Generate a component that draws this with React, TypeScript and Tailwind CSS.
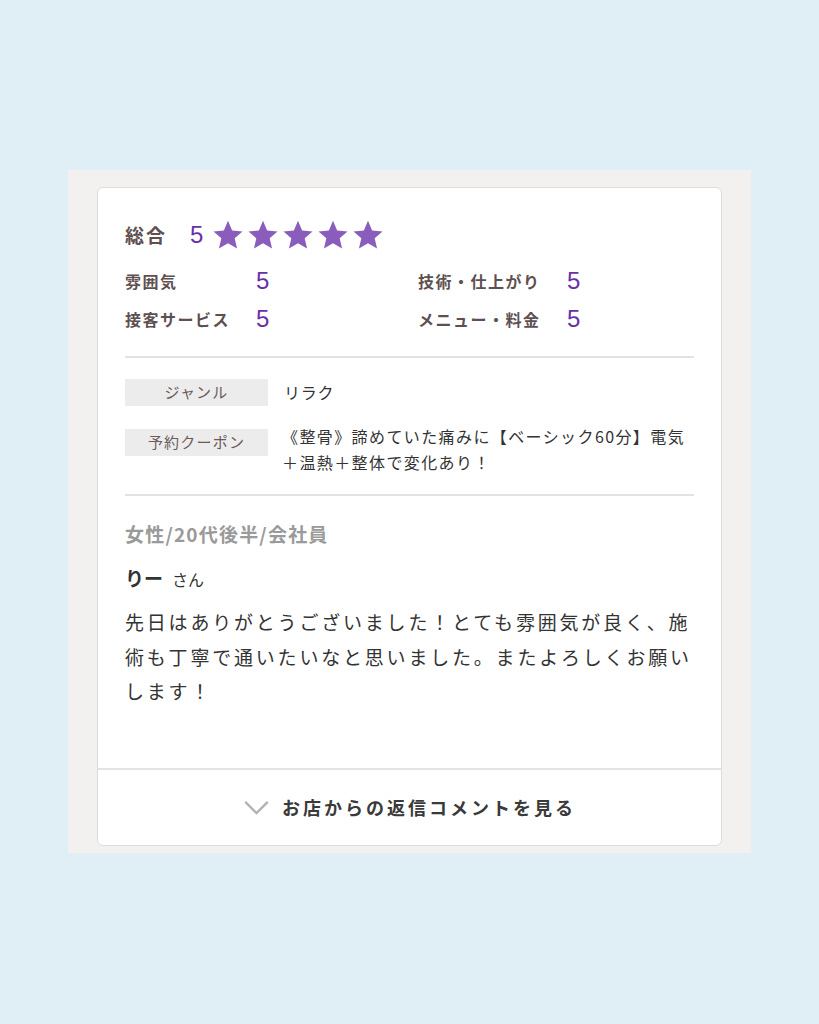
const font = { fontFamily: '"Noto Sans CJK JP", "Noto Sans", sans-serif' };
const num = { fontFamily: '"Liberation Sans", sans-serif' };

function Star() {
  return (
    <svg viewBox="0 0 24 24" className="size-[32px] fill-[#8a5cbc]">
      <path d="M12 1.4l3.1 7.2 7.8.7-5.9 5.1 1.8 7.7L12 18.1l-6.8 4 1.8-7.7-5.9-5.1 7.8-.7z" />
    </svg>
  );
}

function SubRating({ label, labelWidth }: { label: string; labelWidth: string }) {
  return (
    <div className="flex items-center h-[38px]">
      <span className={`${labelWidth} text-[16px] font-bold tracking-[1.5px] text-[#5e5050]`}>{label}</span>
      <span className="text-[24px] text-[#6a30a8] leading-none" style={num}>5</span>
    </div>
  );
}

export default function App() {
  return (
    <div className="min-h-screen bg-[#e0eff6] flex justify-center pt-[170px]" style={font}>
      <div className="w-[683px] h-[683px] bg-[#f2f1ef] px-[29px] pt-[17px] pb-[7px]">
        <div className="h-full bg-white border border-[#dcdcdc] rounded-[6px] flex flex-col">
          <div className="flex-1 px-[27px] pt-[30px]">
            <div className="flex items-center h-[34px]">
              <span className="text-[19px] font-bold tracking-[2px] text-[#5e5050] w-[65px]">総合</span>
              <span className="text-[24px] text-[#6a30a8] mr-[9px] leading-none" style={num}>5</span>
              <div className="flex gap-[3px]">
                <Star />
                <Star />
                <Star />
                <Star />
                <Star />
              </div>
            </div>
            <div className="grid grid-cols-[293px_1fr] mt-[10px]">
              <SubRating label="雰囲気" labelWidth="w-[131px]" />
              <SubRating label="技術・仕上がり" labelWidth="w-[149px]" />
              <SubRating label="接客サービス" labelWidth="w-[131px]" />
              <SubRating label="メニュー・料金" labelWidth="w-[149px]" />
            </div>
            <div className="border-t-2 border-[#e2e2e2] mt-[18px]" />
            <div className="pt-[21px] pb-[19px] flex flex-col gap-[23px] text-[16px]">
              <div className="flex">
                <div className="w-[143px] h-[27px] shrink-0 bg-[#ececec] text-[#6b5b5b] text-[15px] tracking-[1.2px] flex items-center justify-center">ジャンル</div>
                <div className="pl-[16px] leading-[27px] text-[#333] tracking-[0.8px]">リラク</div>
              </div>
              <div className="flex items-start">
                <div className="w-[143px] h-[27px] shrink-0 bg-[#ececec] text-[#6b5b5b] text-[15px] tracking-[1.2px] flex items-center justify-center">予約クーポン</div>
                <div className="pl-[14px] leading-[26px] -mt-[6px] text-[#333] tracking-[1.4px]">《整骨》諦めていた痛みに【ベーシック60分】電気＋温熱＋整体で変化あり！</div>
              </div>
            </div>
            <div className="border-t-2 border-[#e2e2e2]" />
            <div className="pt-[24px] text-[19px] font-bold text-[#9a9a9a] tracking-[1.2px] leading-[28px]">女性/20代後半/会社員</div>
            <div className="mt-[16px] leading-[28px] text-[#333] flex items-baseline">
              <span className="text-[19px] font-bold">りー</span>
              <span className="text-[16px] ml-[9px]">さん</span>
            </div>
            <p className="mt-[12px] text-[19px] leading-[34.5px] tracking-[2.8px] text-[#333]">
              先日はありがとうございました！とても雰囲気が良く、施術も丁寧で通いたいなと思いました。またよろしくお願いします！
            </p>
          </div>
          <div className="border-t-2 border-[#e4e4e4] h-[77px] flex items-center justify-center gap-[12px]">
            <svg viewBox="0 0 28 16" className="w-[27px] h-[15px]">
              <path d="M2 2l12 12L26 2" fill="none" stroke="#b3b3b3" strokeWidth="2.6" />
            </svg>
            <span className="text-[18px] font-bold text-[#3a3a3a] tracking-[3px]">お店からの返信コメントを見る</span>
          </div>
        </div>
      </div>
    </div>
  );
}
